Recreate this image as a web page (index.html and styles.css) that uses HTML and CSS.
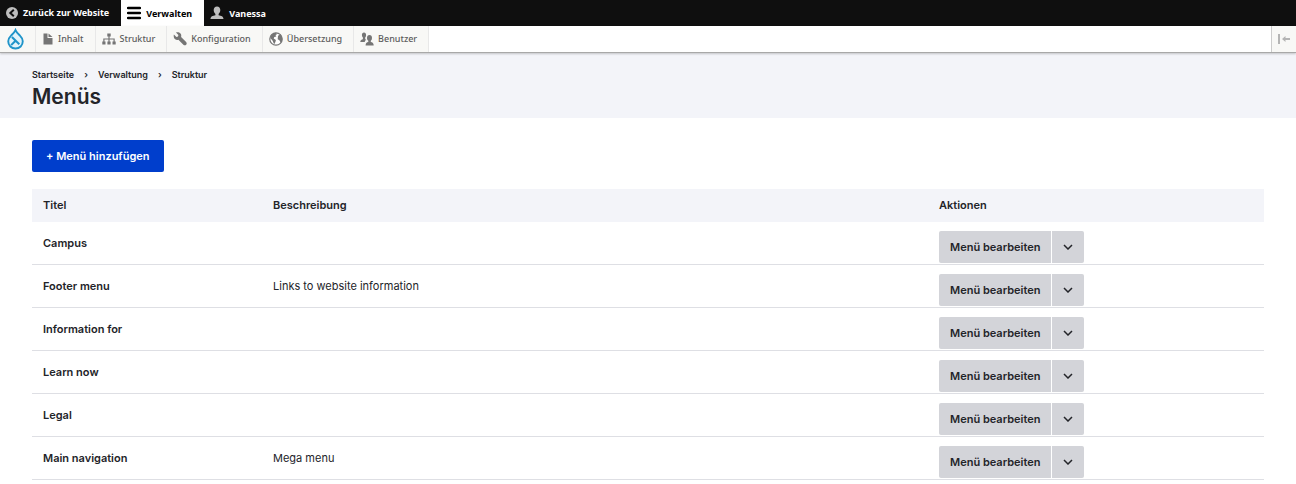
FILE: index.html
```html
<!DOCTYPE html>
<html lang="de">
<head>
    <meta charset="UTF-8">
    <meta name="viewport" content="width=device-width, initial-scale=1.0">
    <title>Menüs</title>
    <link rel="stylesheet" href="styles.css">
</head>
<body>

    <nav class="toolbar-bar" aria-label="Werkzeugleiste">
        <a href="#" class="bar-item bar-back">
            <svg class="icon" viewBox="0 0 12 12"><circle cx="6" cy="6" r="6" fill="#bebebe"/><path d="M7.8 2.7 4.3 6l3.5 3.3" fill="none" stroke="#0f0f0f" stroke-width="2"/></svg>
            Zurück zur Website
        </a>
        <button type="button" class="bar-item bar-manage active">
            <svg class="icon icon-burger" viewBox="0 0 14 14"><path d="M1 2h12M1 7h12M1 12h12" stroke="#000" stroke-width="2.4" stroke-linecap="round"/></svg>
            Verwalten
        </button>
        <button type="button" class="bar-item bar-user">
            <svg class="icon icon-user" viewBox="0 0 14 14"><path d="M7 .5c2.100 0 3.300 1.500 3.300 3.600 0 1.600-.7 3-1.700 3.800v1.300c2.500.5 4.900 1.200 4.900 3.800H.5c0-2.600 2.400-3.300 4.900-3.800V7.900c-1-.8-1.700-2.200-1.700-3.800C3.700 2 4.900.5 7 .5z" fill="#bebebe"/></svg>
            Vanessa
        </button>
    </nav>

    <nav class="toolbar-tray" aria-label="Verwaltungsmenü">
        <a href="#" class="tray-logo" aria-label="Startseite">
            <svg class="logo" viewBox="0 0 18 22"><path d="M9 1.500C10 3.800 11.500 5.200 13.500 7.200c1.900 1.900 3.200 3.600 3.200 6.300 0 4.500-3.300 7.500-7.700 7.500s-7.700-3-7.700-7.500c0-2.700 1.300-4.400 3.200-6.300C6.500 5.200 8 3.800 9 1.500z" fill="#e3f3fa" stroke="#1f94c9" stroke-width="2"/><path d="M5.200 8.800 13 16.600M9.300 12.600 4.400 17.500" fill="none" stroke="#1f94c9" stroke-width="2.200"/></svg>
        </a>
        <a href="#" class="tray-item">
            <svg class="icon" viewBox="0 0 12 12"><path d="M1.500.5h4v4.500h5v6.500h-9zM6.500.5l4 3.500h-4z" fill="#757575"/></svg>
            Inhalt
        </a>
        <a href="#" class="tray-item">
            <svg class="icon icon-wide" viewBox="0 0 14 12"><path d="M5.300.5h3.400v3H5.300zM.3 8.500h3.200v3H.3zM5.400 8.500h3.200v3H5.400zM10.500 8.500h3.200v3h-3.200z" fill="#757575"/><path d="M7 3v6M1.900 9V6h10.200v3" fill="none" stroke="#757575" stroke-width="1.200"/></svg>
            Struktur
        </a>
        <a href="#" class="tray-item">
            <svg class="icon icon-wide" viewBox="0 0 14 14"><path d="M.9 2.500 3.400 4.900l1.600-.4.400-1.600L3 .5c1.700-.6 3.500-.1 4.500 1.100.9 1.100.9 2.300.6 3.300l5 5c.8.800.8 2 .1 2.800-.8.800-2 .8-2.800 0l-5-5c-1.200.4-2.600.1-3.500-.7C.8 5.900.4 4.100.9 2.500z" fill="#757575"/></svg>
            Konfiguration
        </a>
        <a href="#" class="tray-item">
            <svg class="icon icon-wide" viewBox="0 0 14 14"><circle cx="7" cy="7" r="6.200" fill="#fff" stroke="#757575" stroke-width="1.200"/><path d="M2.200 3.200C3.300 1.700 5 .8 7 .8l1 1.500-1.500.8.800 1.400-2 .5-.6 1.500L6.900 8l-.5 2-1.200 2.300C4.300 11 4.300 9.800 3.300 8.300L1.200 6zM9 3.700l2.500-1.500 1.600 3 .1 3.300-1.600 2-1.200-2.200L8.700 7.200z" fill="#757575"/></svg>
            Übersetzung
        </a>
        <a href="#" class="tray-item">
            <svg class="icon icon-wide" viewBox="0 0 14 14"><path d="M4 .5c1.300 0 2.100 1 2.100 2.500 0 1-.3 1.900-.9 2.500v1.700l1 .5c-.9.500-1.300 1.200-1.400 2.200H.3C.3 8.400 1.400 7.700 2.900 7.300V5.500c-.6-.6-1-1.500-1-2.500C1.900 1.500 2.700.5 4 .5z" fill="#757575"/><path d="M9.500 3c1.600 0 2.500 1.200 2.500 2.900 0 1.200-.4 2.200-1.200 2.900v1.300c1.700.4 2.900 1 2.900 3.400H5.600c0-2.400 1-3 2.700-3.400V8.800C7.500 8.100 7 7.100 7 5.900 7 4.200 7.900 3 9.500 3z" fill="#757575"/></svg>
            Benutzer
        </a>
        <button type="button" class="tray-toggle" aria-label="Vertikale Ausrichtung">
            <svg class="icon icon-wide" viewBox="0 0 14 12"><path d="M1 1h2v10H1zM5 6l3.500-3v2H13v2H8.500v2z" fill="#b4b4b4"/></svg>
        </button>
    </nav>

    <header class="content-header">
        <nav class="breadcrumb" aria-label="Pfadnavigation">
            <a href="#">Startseite</a>
            <span class="separator">›</span>
            <a href="#">Verwaltung</a>
            <span class="separator">›</span>
            <a href="#">Struktur</a>
        </nav>
        <h1>Menüs</h1>
    </header>

    <main class="container">
        <a href="#" class="button button-primary">+ Menü hinzufügen</a>

        <table class="menu-table">
            <thead>
                <tr>
                    <th class="col-title">Titel</th>
                    <th class="col-description">Beschreibung</th>
                    <th class="col-actions">Aktionen</th>
                </tr>
            </thead>
            <tbody>
                <tr>
                    <td class="menu-label">Campus</td>
                    <td></td>
                    <td><div class="dropbutton"><a href="#" class="drop-action">Menü bearbeiten</a><button type="button" class="drop-toggle" aria-label="Weitere Aktionen"><svg class="chevron" viewBox="0 0 10 6"><path d="M1 1l4 4 4-4"/></svg></button></div></td>
                </tr>
                <tr>
                    <td class="menu-label">Footer menu</td>
                    <td>Links to website information</td>
                    <td><div class="dropbutton"><a href="#" class="drop-action">Menü bearbeiten</a><button type="button" class="drop-toggle" aria-label="Weitere Aktionen"><svg class="chevron" viewBox="0 0 10 6"><path d="M1 1l4 4 4-4"/></svg></button></div></td>
                </tr>
                <tr>
                    <td class="menu-label">Information for</td>
                    <td></td>
                    <td><div class="dropbutton"><a href="#" class="drop-action">Menü bearbeiten</a><button type="button" class="drop-toggle" aria-label="Weitere Aktionen"><svg class="chevron" viewBox="0 0 10 6"><path d="M1 1l4 4 4-4"/></svg></button></div></td>
                </tr>
                <tr>
                    <td class="menu-label">Learn now</td>
                    <td></td>
                    <td><div class="dropbutton"><a href="#" class="drop-action">Menü bearbeiten</a><button type="button" class="drop-toggle" aria-label="Weitere Aktionen"><svg class="chevron" viewBox="0 0 10 6"><path d="M1 1l4 4 4-4"/></svg></button></div></td>
                </tr>
                <tr>
                    <td class="menu-label">Legal</td>
                    <td></td>
                    <td><div class="dropbutton"><a href="#" class="drop-action">Menü bearbeiten</a><button type="button" class="drop-toggle" aria-label="Weitere Aktionen"><svg class="chevron" viewBox="0 0 10 6"><path d="M1 1l4 4 4-4"/></svg></button></div></td>
                </tr>
                <tr>
                    <td class="menu-label">Main navigation</td>
                    <td>Mega menu</td>
                    <td><div class="dropbutton"><a href="#" class="drop-action">Menü bearbeiten</a><button type="button" class="drop-toggle" aria-label="Weitere Aktionen"><svg class="chevron" viewBox="0 0 10 6"><path d="M1 1l4 4 4-4"/></svg></button></div></td>
                </tr>
            </tbody>
        </table>
    </main>

</body>
</html>
```
FILE: styles.css
```css
* {
    box-sizing: border-box;
}
body {
    margin: 0;
    background-color: #ffffff;
    color: #232429;
    font-family: Inter, sans-serif;
    font-size: 11px;
    line-height: 16px;
    font-optical-sizing: none;
}
a {
    color: inherit;
    text-decoration: none;
}
button {
    border: none;
    margin: 0;
    cursor: pointer;
}
h1 {
    margin: 0;
    font-size: 21px;
    line-height: 28px;
    font-weight: 600;
}

/* Toolbar */
.toolbar-bar,
.toolbar-tray {
    display: flex;
    font-family: "Noto Sans", sans-serif;
}
.toolbar-bar {
    height: 26px;
    background-color: #0f0f0f;
}
.bar-item {
    display: flex;
    align-items: center;
    gap: 5px;
    padding: 0 12px 0 6px;
    background-color: transparent;
    color: #ffffff;
    font-family: inherit;
    font-size: 9px;
    font-weight: 700;
}
.bar-item.active {
    background-color: #ffffff;
    color: #000000;
}
.toolbar-tray {
    height: 27px;
    background-color: #ffffff;
    border-bottom: 1px solid #a8a8a8;
    box-shadow: 0 1px 2px rgba(0, 0, 0, 0.2);
    position: relative;
}
.tray-logo,
.tray-item {
    display: flex;
    align-items: center;
    background-color: #f8f8f6;
    border-right: 1px solid #e8e8e8;
}
.tray-logo {
    padding: 0 11px 0 7px;
}
.tray-item {
    gap: 4px;
    padding: 0 11px 0 6px;
    color: #5c5c5c;
    font-size: 9px;
    font-weight: 500;
}
.tray-toggle {
    margin-left: auto;
    padding: 0 5px;
    background-color: #f8f8f6;
    border-left: 1px solid #cccccc;
    display: flex;
    align-items: center;
}
.icon {
    width: 12px;
    height: 12px;
    flex: none;
}
.icon-wide,
.icon-burger,
.icon-user {
    width: 14px;
    height: 14px;
}
.logo {
    width: 17px;
    height: 22px;
}

/* Page header */
.content-header {
    padding: 14px 32px 7px;
    background-color: #f3f4f9;
}
.breadcrumb {
    display: flex;
    gap: 10px;
    font-size: 9px;
    font-weight: 600;
}

.container {
    padding: 22px 32px 0;
}
.button {
    display: inline-block;
    padding: 8px 14px;
    border-radius: 2px;
    font-weight: 600;
}
.button-primary {
    background-color: #003ecc;
    color: #ffffff;
}

/* Menu list */
.menu-table {
    width: 100%;
    margin-top: 17px;
    border-collapse: separate;
    border-spacing: 0;
    table-layout: fixed;
}
.menu-table th {
    padding: 8px 11px 9px;
    background-color: #f3f4f9;
    text-align: left;
    font-weight: 600;
}
.menu-table td {
    padding: 9px 11px 1px;
    vertical-align: top;
    border-bottom: 1px solid #dedfe4;
    line-height: 24px;
}
.menu-table th:last-child,
.menu-table td:last-child {
    padding-left: 0;
}
.menu-table .menu-label {
    font-weight: 600;
}
.col-title {
    width: 230px;
}
.col-actions {
    width: 325px;
}
.dropbutton {
    display: flex;
    gap: 1px;
    font-weight: 600;
    line-height: 16px;
}
.drop-action,
.drop-toggle {
    background-color: #d3d4d9;
}
.drop-action {
    padding: 8px 11px;
    border-radius: 2px 0 0 2px;
}
.drop-toggle {
    display: flex;
    align-items: center;
    padding: 0 11px;
    border-radius: 0 2px 2px 0;
}
.chevron {
    width: 10px;
    height: 6px;
    fill: none;
    stroke: #232429;
    stroke-width: 1.5;
}
```
